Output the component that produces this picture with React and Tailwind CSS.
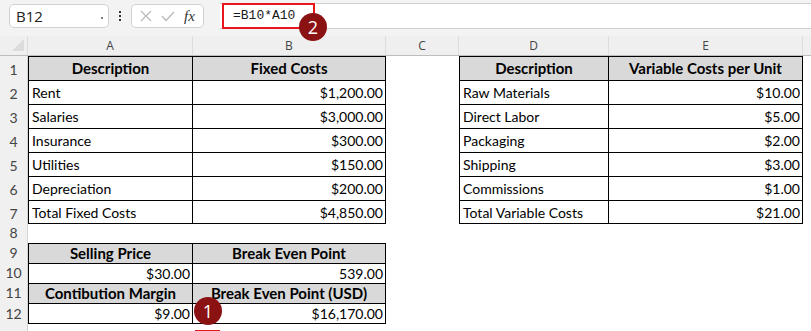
import React from "react";

const F = { fontFamily: "Lato, 'Open Sans', sans-serif" };

function RowHead({ n, h }) {
  return (
    <div
      className={`w-[28px] shrink-0 ${h} bg-[#f0f0f0] border-r border-[#d4d4d4] flex items-end justify-center pb-[2px] text-[14px] leading-[16px] text-[#444]`}
      style={F}
    >
      {n}
    </div>
  );
}

function Cell({ w, children, cls = "" }) {
  return (
    <div className={`${w} shrink-0 h-full flex items-center text-black ${cls}`} style={F}>
      {children}
    </div>
  );
}

const A = "w-[165px]";
const B = "w-[193px]";
const C = "w-[73px]";
const D = "w-[150px]";
const E = "w-[194px]";

function Row7({ n, h, a, b, d, e, head, last }) {
  const base = "border-black border-r border-t " + (last ? "border-b " : "");
  const hb = head ? "bg-[#d9d9d9] font-bold justify-center text-[15px]" : "bg-white text-[14px]";
  return (
    <div className={`flex ${h}`}>
      <RowHead n={n} h={h} />
      <Cell w={A} cls={`${base} border-l ${hb} ${head ? "" : "pl-[3px]"}`}>{a}</Cell>
      <Cell w={B} cls={`${base} ${hb} ${head ? "" : "justify-end pr-[2px]"}`}>{b}</Cell>
      <Cell w={C} cls="bg-white" />
      <Cell w={D} cls={`${base} border-l ${hb} ${head ? "" : "pl-[3px]"}`}>{d}</Cell>
      <Cell w={E} cls={`${base} ${hb} ${head ? "" : "justify-end pr-[2px]"}`}>{e}</Cell>
      <div className="flex-1 bg-white" />
    </div>
  );
}

function RowLow({ n, h, a, b, head, last }) {
  const base = "border-black border-r border-t " + (last ? "border-b " : "");
  const hb = head
    ? "bg-[#d9d9d9] font-bold justify-center text-[15px]"
    : "bg-white justify-end pr-[2px] text-[14px]";
  return (
    <div className={`flex ${h}`}>
      <RowHead n={n} h={h} />
      <Cell w={A} cls={`${base} border-l ${hb}`}>{a}</Cell>
      <Cell w={B} cls={`${base} ${hb}`}>{b}</Cell>
      <div className="flex-1 bg-white" />
    </div>
  );
}

function Badge({ n, cls }) {
  return (
    <div
      className={`absolute w-[28px] h-[28px] rounded-full bg-[#8b1212] text-white flex items-center justify-center text-[18px] leading-none ${cls}`}
      style={{ fontFamily: "'Open Sans', sans-serif" }}
    >
      {n}
    </div>
  );
}

export default function App() {
  const rows = [
    ["Rent", "$1,200.00", "Raw Materials", "$10.00"],
    ["Salaries", "$3,000.00", "Direct Labor", "$5.00"],
    ["Insurance", "$300.00", "Packaging", "$2.00"],
    ["Utilities", "$150.00", "Shipping", "$3.00"],
    ["Depreciation", "$200.00", "Commissions", "$1.00"],
    ["Total Fixed Costs", "$4,850.00", "Total Variable Costs", "$21.00"],
  ];
  return (
    <div className="relative w-[811px] h-[331px] overflow-hidden bg-white">
      {/* Formula bar */}
      <div className="h-[36px] bg-[#f3f3f3] flex items-start pt-[3px]">
        <div className="ml-[9px] mt-[1px] w-[100px] h-[24px] bg-white border border-[#d2d2d2] rounded-[5px] flex items-center pl-[6px] pr-[5px] justify-between">
          <span className="text-[15px] text-[#222]" style={{ fontFamily: "'Open Sans', sans-serif" }}>B12</span>
          <span className="w-[2px] h-[2px] bg-[#555] rounded-full mt-[4px]" />
        </div>
        <div className="w-[22px] h-[25px] flex flex-col items-center justify-center gap-[2px]">
          <span className="w-[2px] h-[2px] bg-[#333]" />
          <span className="w-[2px] h-[2px] bg-[#333]" />
          <span className="w-[2px] h-[2px] bg-[#333]" />
        </div>
        <div className="mt-[1px] w-[73px] h-[24px] bg-white border border-[#d2d2d2] rounded-[5px] flex items-center pl-[8px] gap-[9px]">
          <svg width="12" height="12" viewBox="0 0 12 12" stroke="#b8b8b8" strokeWidth="1.2" fill="none">
            <path d="M1 1L11 11M11 1L1 11" />
          </svg>
          <svg width="14" height="11" viewBox="0 0 14 11" stroke="#b8b8b8" strokeWidth="1.2" fill="none">
            <path d="M1 5L5 9.5L13 1" />
          </svg>
          <span className="text-[15px] italic text-[#333] leading-none" style={{ fontFamily: "'Liberation Serif', serif" }}>fx</span>
        </div>
        <div className="ml-[16px] flex-1 h-[26px] bg-white border-y border-[#cfcfcf] flex items-center">
          <div className="ml-[2px] w-[93px] h-[26px] border-2 border-[#e8161b] flex items-center pl-[9px]">
            <span className="text-[13px] text-[#1a1a1a]" style={{ fontFamily: "'Liberation Mono', monospace" }}>=B10*A10</span>
          </div>
        </div>
      </div>
      {/* Column headers */}
      <div className="flex h-[20px] bg-[#efefef] border-b border-[#bdbdbd] text-[12px] text-[#444]" style={{ fontFamily: "'Open Sans', sans-serif" }}>
        <div className="w-[28px] shrink-0 border-r border-[#dcdcdc] relative">
          <svg className="absolute left-[12px] top-[3px]" width="12" height="12" viewBox="0 0 12 12">
            <path d="M12 0V12H0Z" fill="#dcdcdc" />
          </svg>
        </div>
        <div className={`${A} shrink-0 border-r border-[#dcdcdc] flex items-center justify-center`}>A</div>
        <div className={`${B} shrink-0 border-r border-[#dcdcdc] flex items-center justify-center`}>B</div>
        <div className={`${C} shrink-0 border-r border-[#dcdcdc] flex items-center justify-center`}>C</div>
        <div className={`${D} shrink-0 border-r border-[#dcdcdc] flex items-center justify-center`}>D</div>
        <div className={`${E} shrink-0 border-r border-[#dcdcdc] flex items-center justify-center`}>E</div>
        <div className="flex-1" />
      </div>
      {/* Rows 1-7 */}
      <Row7 n={1} h="h-[24px]" a="Description" b="Fixed Costs" d="Description" e="Variable Costs per Unit" head />
      {rows.map((r, i) => (
        <Row7 key={i} n={i + 2} h="h-[24px]" a={r[0]} b={r[1]} d={r[2]} e={r[3]} last={i === 5} />
      ))}
      <div className="flex h-[19px]">
        <RowHead n={8} h="h-[19px]" />
        <div className="flex-1 bg-white" />
      </div>
      <RowLow n={9} h="h-[20px]" a="Selling Price" b="Break Even Point" head />
      <RowLow n={10} h="h-[20px]" a="$30.00" b="539.00" />
      <RowLow n={11} h="h-[20px]" a="Contibution Margin" b="Break Even Point (USD)" head />
      <RowLow n={12} h="h-[21px]" a="$9.00" b="$16,170.00" last />
      <div className="flex h-[10px]">
        <div className="w-[28px] bg-[#f0f0f0] border-r border-[#d4d4d4]" />
        <div className="flex-1 bg-white" />
      </div>
      <div className="absolute left-[195px] top-[330px] w-[25px] h-[2px] bg-[#e8161b]" />
      <Badge n="2" cls="left-[299px] top-[13px]" />
      <Badge n="1" cls="left-[194px] top-[297px]" />
    </div>
  );
}
